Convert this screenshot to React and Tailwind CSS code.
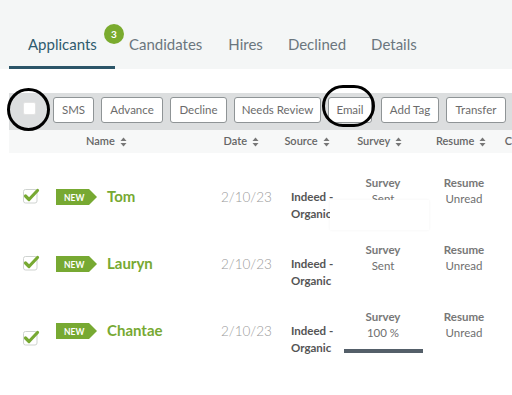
import React from "react";

const font = { fontFamily: "Lato, 'Open Sans', sans-serif" };

function SortIcon() {
  return (
    <svg width="7" height="10" viewBox="0 0 7 10" className="ml-[5px] inline-block">
      <path d="M3.5 0.5 L6.5 4 L0.5 4 Z" fill="#777" />
      <path d="M3.5 9.5 L6.5 6 L0.5 6 Z" fill="#777" />
    </svg>
  );
}

function Check() {
  return (
    <svg width="17" height="16" viewBox="0 0 17 16">
      <rect x="0.5" y="1.5" width="13.5" height="13.5" rx="2" fill="#fff" stroke="#cfd3d0" />
      <path d="M2.5 8 L6 11.5 L14.5 2.5" fill="none" stroke="#77a932" strokeWidth="3.2" strokeLinecap="round" strokeLinejoin="round" />
    </svg>
  );
}

function NewTag() {
  return (
    <svg width="41" height="16" viewBox="0 0 41 16">
      <path d="M0 0 H33 L41 8 L33 16 H0 Z" fill="#77a932" />
      <text x="8" y="11.5" fill="#fff" fontSize="8.5" fontWeight="700" fontFamily="Lato, sans-serif">NEW</text>
    </svg>
  );
}

const buttons = [
  { label: "SMS", w: "w-[41px]", ml: "ml-[0px]" },
  { label: "Advance", w: "w-[62px]", ml: "ml-[7px]" },
  { label: "Decline", w: "w-[57px]", ml: "ml-[7px]" },
  { label: "Needs Review", w: "w-[87px]", ml: "ml-[7px]" },
  { label: "Email", w: "w-[44px]", ml: "ml-[7px]" },
  { label: "Add Tag", w: "w-[58px]", ml: "ml-[9px]" },
  { label: "Transfer", w: "w-[60px]", ml: "ml-[7px]" },
];

const rows = [
  { name: "Tom", survey: "Sent", checkTop: "mt-[18px]" },
  { name: "Lauryn", survey: "Sent", checkTop: "mt-[18px]" },
  { name: "Chantae", survey: "100 %", checkTop: "mt-[26px]", bar: true },
];

export default function App() {
  return (
    <div className="relative w-[512px] h-[395px] overflow-hidden bg-white" style={font}>
      {/* Tabs */}
      <div className="h-[69px] bg-[#f4f6f6] flex items-end pl-[9px]">
        <div className="relative w-[106px] h-[34px] pl-[19px] border-b-[3px] border-[#2b5568] text-[15px] leading-[18px] text-[#2f5b6e]">
          Applicants
          <span className="absolute left-[95px] top-[-11px] w-[20px] h-[20px] rounded-full bg-[#7aab2e] text-white text-[10px] font-bold flex items-center justify-center">
            3
          </span>
        </div>
        <div className="flex h-[34px] text-[15px] leading-[18px] text-[#6b767e]">
          <span className="ml-[14px]">Candidates</span>
          <span className="ml-[26px]">Hires</span>
          <span className="ml-[25px]">Declined</span>
          <span className="ml-[25px]">Details</span>
        </div>
      </div>

      {/* Toolbar */}
      <div className="mt-[24px] ml-[9px] h-[37px] bg-[#dcdedf] flex items-start pt-[4px]">
        <div className="ml-[14px] mt-[5px] w-[13px] h-[13px] rounded-[2px] bg-white border border-[#e4e4e4]" />
        <div className="flex ml-[17px]">
          {buttons.map((b) => (
            <div
              key={b.label}
              className={`${b.w} ${b.ml} h-[26px] flex items-center justify-center bg-white border border-[#8f9496] rounded-[3px] text-[11.5px] text-[#6b6b6b] whitespace-nowrap`}
            >
              {b.label}
            </div>
          ))}
        </div>
      </div>

      {/* Column header */}
      <div className="ml-[9px] h-[23px] bg-[#f7f8f8] flex items-center pl-[77px] text-[11px] font-semibold text-[#666] whitespace-nowrap">
        <div className="w-[138px] flex items-center">Name<SortIcon /></div>
        <div className="w-[61px] flex items-center">Date<SortIcon /></div>
        <div className="w-[73px] flex items-center">Source<SortIcon /></div>
        <div className="w-[79px] flex items-center">Survey<SortIcon /></div>
        <div className="w-[69px] flex items-center">Resume<SortIcon /></div>
        <div>C</div>
      </div>

      {/* Rows */}
      <div className="mt-[17px]">
        {rows.map((r) => (
          <div key={r.name} className="h-[67px] flex items-start pl-[23px]">
            <div className={`w-[14px] ${r.checkTop}`}>
              <Check />
            </div>
            <div className="ml-[19px] mt-[19px] w-[41px] h-[16px] flex">
              <NewTag />
            </div>
            <div className="ml-[10px] mt-[17px] w-[114px] text-[15px] leading-[18px] font-bold text-[#77a932]">
              {r.name}
            </div>
            <div className="mt-[18px] w-[70px] text-[13.5px] leading-[18px] font-light text-[#9a9a9a]">
              2/10/23
            </div>
            <div className="mt-[18px] w-[52px] text-[11.5px] leading-[17px] font-bold text-[#555]">
              <div>Indeed -</div>
              <div>Organic</div>
            </div>
            <div className="mt-[5px] w-[80px] flex flex-col items-center text-[11.5px] leading-[16px] text-[#6f6f6f]">
              <div className="font-bold text-[#777]">Survey</div>
              <div>{r.survey}</div>
              {r.bar && <div className="mt-[8px] w-[79px] h-[4px] bg-[#545f69]" />}
            </div>
            <div className="mt-[5px] w-[82px] flex flex-col items-center text-[11.5px] leading-[16px] text-[#6f6f6f]">
              <div className="font-bold text-[#777]">Resume</div>
              <div>Unread</div>
            </div>
          </div>
        ))}
      </div>

      {/* Overlay white box */}
      <div className="absolute left-[330px] top-[200px] w-[99px] h-[30px] bg-white shadow-[0_0_3px_rgba(0,0,0,0.05)]" />

      {/* Annotation circles */}
      <div className="absolute left-[7px] top-[88px] w-[43px] h-[43px] rounded-full border-[3px] border-black" />
      <div className="absolute left-[322px] top-[85px] w-[53px] h-[42px] rounded-full border-[3px] border-black" />
    </div>
  );
}
